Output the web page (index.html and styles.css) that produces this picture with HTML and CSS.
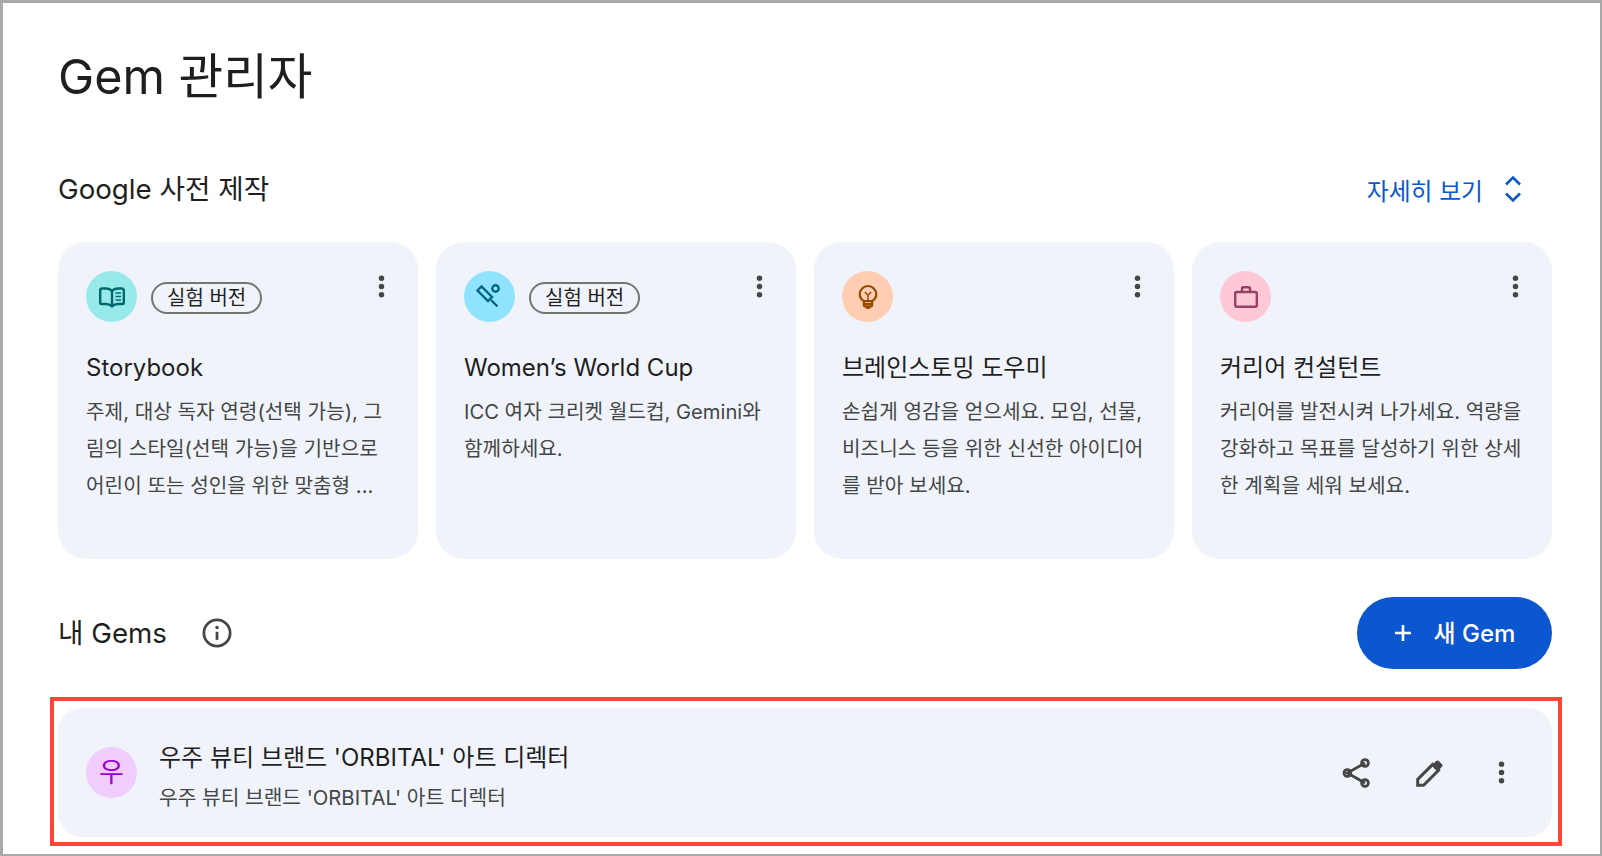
FILE: index.html
```html
<!DOCTYPE html>
<html lang="ko">
<head>
    <meta charset="UTF-8">
    <meta name="viewport" content="width=device-width, initial-scale=1.0">
    <title>Gem 관리자</title>
    <link rel="stylesheet" href="styles.css">
</head>
<body>
    <div class="frame">
        <h1>Gem 관리자</h1>

        <!-- Premade gems -->
        <div class="section-head">
            <h2>Google 사전 제작</h2>
            <a class="more-link">자세히 보기
                <svg class="unfold" viewBox="0 0 18 28"><path d="M2 9.500 9 2.500l7 7M2 18.500l7 7 7-7"/></svg>
            </a>
        </div>

        <div class="card-grid">
            <div class="card">
                <div class="card-top">
                    <div class="avatar avatar-teal">
                        <svg class="icon-book" viewBox="0 0 28 22"><path d="M14 5C12.500 3.300 10.500 2.500 8 2.500H4A1.800 1.800 0 0 0 2.200 4.300V16.700A1.300 1.300 0 0 0 3.500 18H8c2.500 0 4.500.8 6 2.300 1.500-1.500 3.500-2.300 6-2.300h4.500a1.300 1.300 0 0 0 1.300-1.300V4.300A1.800 1.800 0 0 0 24 2.500h-4c-2.500 0-4.500.8-6 2.500v15.300"/><path class="thin" d="M17.500 7h5.500M17.500 10.500h5.500M17.500 14h5.500"/></svg>
                    </div>
                    <span class="chip">실험 버전</span>
                    <svg class="more" viewBox="0 0 24 24"><circle cx="12" cy="6" r="2"/><circle cx="12" cy="12" r="2"/><circle cx="12" cy="18" r="2"/></svg>
                </div>
                <h3>Storybook</h3>
                <p>주제, 대상 독자 연령(선택 가능), 그림의 스타일(선택 가능)을 기반으로 어린이 또는 성인을 위한 맞춤형 ...</p>
            </div>

            <div class="card">
                <div class="card-top">
                    <div class="avatar avatar-sky">
                        <svg class="icon-bat" viewBox="0 0 28 28"><path d="M1.500 7.500 5.500 3.500 16 14l-4 4z"/><path d="M15 17l6.500 6.500"/><circle cx="19.500" cy="5.500" r="3.200"/></svg>
                    </div>
                    <span class="chip">실험 버전</span>
                    <svg class="more" viewBox="0 0 24 24"><circle cx="12" cy="6" r="2"/><circle cx="12" cy="12" r="2"/><circle cx="12" cy="18" r="2"/></svg>
                </div>
                <h3>Women’s World Cup</h3>
                <p>ICC 여자 크리켓 월드컵, Gemini와 함께하세요.</p>
            </div>

            <div class="card">
                <div class="card-top">
                    <div class="avatar avatar-peach">
                        <svg class="icon-bulb" viewBox="0 0 24 28"><path d="M7.500 18.500C4.500 16.500 3 14 3 11a9 9 0 0 1 18 0c0 3-1.500 5.500-4.500 7.500z"/><path d="M7.500 18.500v4.500c0 1 .8 1.500 1.500 1.500h6c.7 0 1.500-.5 1.500-1.500v-4.500M7.500 21.800h9M10 26h4"/><path class="thin" d="M12 18v-6.500M8.500 8.500 12 12l3.500-3.500"/></svg>
                    </div>
                    <svg class="more" viewBox="0 0 24 24"><circle cx="12" cy="6" r="2"/><circle cx="12" cy="12" r="2"/><circle cx="12" cy="18" r="2"/></svg>
                </div>
                <h3>브레인스토밍 도우미</h3>
                <p>손쉽게 영감을 얻으세요. 모임, 선물, 비즈니스 등을 위한 신선한 아이디어를 받아 보세요.</p>
            </div>

            <div class="card">
                <div class="card-top">
                    <div class="avatar avatar-pink">
                        <svg class="icon-work" viewBox="0 0 24 22"><rect x="1.200" y="6" width="21.600" height="14.800" rx="1.500"/><path d="M8 6V2.800c0-.9.600-1.500 1.500-1.500h5c.9 0 1.500.6 1.500 1.500V6"/></svg>
                    </div>
                    <svg class="more" viewBox="0 0 24 24"><circle cx="12" cy="6" r="2"/><circle cx="12" cy="12" r="2"/><circle cx="12" cy="18" r="2"/></svg>
                </div>
                <h3>커리어 컨설턴트</h3>
                <p>커리어를 발전시켜 나가세요. 역량을 강화하고 목표를 달성하기 위한 상세한 계획을 세워 보세요.</p>
            </div>
        </div>

        <!-- My gems -->
        <div class="section-head gems-head">
            <div class="gems-title">
                <h2>내 Gems</h2>
                <svg class="info" viewBox="0 0 24 24"><circle cx="12" cy="12" r="10.500"/><path d="M12 11v6.500"/><circle class="dot" cx="12" cy="7.500" r="1.400"/></svg>
            </div>
            <button class="new-gem">
                <svg class="plus" viewBox="0 0 18 18"><path d="M9 1v16M1 9h16"/></svg>
                <span class="new-gem-label">새 Gem</span>
            </button>
        </div>

        <div class="highlight">
            <div class="gem-row">
                <div class="avatar avatar-purple">우</div>
                <div class="gem-text">
                    <div class="gem-name">우주 뷰티 브랜드 'ORBITAL' 아트 디렉터</div>
                    <div class="gem-desc">우주 뷰티 브랜드 'ORBITAL' 아트 디렉터</div>
                </div>
                <div class="gem-actions">
                    <svg class="share" viewBox="0 0 28 30"><path d="M23 5 5.400 15 23 25"/><circle cx="23" cy="5" r="3.400"/><circle cx="5.400" cy="15" r="3.400"/><circle cx="23" cy="25" r="3.400"/></svg>
                    <svg class="edit" viewBox="0 0 28 28"><path d="M2.500 25.500V20L16.500 6 22 11.500 8 25.500z"/><path class="solid" d="M15.500 7 19.500 3c1-1 2-1 3 0l2.500 2.500c1 1 1 2 0 3l-4 4z"/></svg>
                    <svg class="more" viewBox="0 0 24 24"><circle cx="12" cy="6" r="2"/><circle cx="12" cy="12" r="2"/><circle cx="12" cy="18" r="2"/></svg>
                </div>
            </div>
        </div>
    </div>
</body>
</html>
```

FILE: styles.css
```css
* {
    box-sizing: border-box;
}

body {
    margin: 0;
    font-family: Inter, "Noto Sans CJK KR", sans-serif;
    background-color: #fff;
    color: #1f1f1f;
}

.frame {
    height: 856px;
    overflow: hidden;
    padding: 0 48px 0 55px;
    border: solid #a9a9a9;
    border-width: 3px 2px 2px 3px;
}

h1 {
    margin: 0;
    padding-top: 42px;
    font-size: 48.500px;
    line-height: 64px;
    font-weight: 400;
}

h2 {
    margin: 0;
    font-size: 27.700px;
    line-height: 36px;
    font-weight: 400;
}

.section-head {
    display: flex;
    justify-content: space-between;
    align-items: center;
    margin-top: 62px;
    height: 36px;
}

.more-link {
    display: flex;
    align-items: center;
    gap: 21px;
    padding-right: 30px;
    color: #0b57d0;
    font-size: 23.800px;
}

.unfold {
    width: 18px;
    height: 28px;
    fill: none;
    stroke: #0b57d0;
    stroke-width: 2.600;
}

.card-grid {
    display: grid;
    grid-template-columns: repeat(4, 360px);
    gap: 18px;
    margin-top: 35px;
}

.card {
    height: 317px;
    padding: 29px 28px 0;
    border-radius: 28px;
    background-color: #f0f3fa;
}

.card-top {
    display: flex;
    align-items: center;
    height: 51px;
}

.avatar {
    display: flex;
    flex: none;
    align-items: center;
    justify-content: center;
    width: 51px;
    height: 51px;
    border-radius: 50%;
}

.avatar svg {
    fill: none;
    stroke: currentColor;
    stroke-width: 2.400;
}

.avatar .thin {
    stroke-width: 1.600;
}

.avatar-teal {
    background-color: #98e9ea;
    color: #00696e;
}

.avatar-sky {
    background-color: #90e3ff;
    color: #00677f;
}

.avatar-peach {
    background-color: #ffcdb2;
    color: #964900;
}

.avatar-pink {
    background-color: #ffc8d7;
    color: #954065;
}

.avatar-purple {
    padding-bottom: 4px;
    background-color: #f0ccff;
    color: #9c00d8;
    font-size: 27px;
}

.icon-book {
    width: 28px;
    height: 22px;
}

.icon-bat {
    width: 28px;
    height: 28px;
}

.icon-bulb {
    width: 22px;
    height: 26px;
}

.icon-work {
    width: 24px;
    height: 22px;
}

.chip {
    margin: 3px 0 0 14px;
    padding: 0 14px;
    height: 32px;
    line-height: 28px;
    border: 2px solid #757575;
    border-radius: 16px;
    font-size: 20px;
}

.more {
    width: 33px;
    height: 33px;
    fill: #444746;
}

.card-top .more {
    margin: -21px -8px 0 auto;
}

h3 {
    margin: 28px 0 0;
    font-size: 24px;
    line-height: 36px;
    font-weight: 400;
}

.card p {
    margin: 7px 0 0;
    font-size: 20.200px;
    line-height: 37px;
    color: #444746;
}

.gems-head {
    height: 72px;
    margin-top: 38px;
}

.gems-title {
    display: flex;
    align-items: center;
    gap: 35px;
}

.info {
    width: 30px;
    height: 30px;
    fill: none;
    stroke: #444746;
    stroke-width: 2.200;
}

.info .dot {
    fill: #444746;
    stroke: none;
}

.new-gem {
    display: flex;
    align-items: center;
    justify-content: center;
    gap: 22px;
    width: 195px;
    height: 72px;
    border: none;
    border-radius: 36px;
    background-color: #0b57d0;
    color: #fff;
    font: 500 24px Inter, "Noto Sans CJK KR", sans-serif;
}

.new-gem-label {
    padding-bottom: 4px;
}

.plus {
    width: 18px;
    height: 18px;
    fill: none;
    stroke: #fff;
    stroke-width: 2.600;
}

/* red box drawn round the row in the screenshot */
.highlight {
    margin: 28px -10px 0 -8px;
    padding: 7px 6px 5px 4px;
    border: 4px solid #ff4438;
}

.gem-row {
    display: flex;
    align-items: center;
    height: 129px;
    padding: 0 28px;
    border-radius: 24px;
    background-color: #f0f3fa;
}

.gem-text {
    margin-left: 22px;
    padding-top: 8px;
}

.gem-name {
    font-size: 24px;
    line-height: 34px;
    font-weight: 400;
}

.gem-desc {
    margin-top: 9px;
    font-size: 20.300px;
    line-height: 28px;
    color: #444746;
}

.gem-actions {
    display: flex;
    align-items: center;
    gap: 45px;
    margin-left: auto;
    padding-right: 6px;
}

.gem-actions .edit {
    margin-right: -5px;
}

.share {
    width: 28px;
    height: 30px;
    fill: none;
    stroke: #444746;
    stroke-width: 2.800;
}

.edit {
    width: 30px;
    height: 30px;
    fill: none;
    stroke: #444746;
    stroke-width: 2.800;
}

.edit .solid {
    fill: #444746;
    stroke: none;
}
```
